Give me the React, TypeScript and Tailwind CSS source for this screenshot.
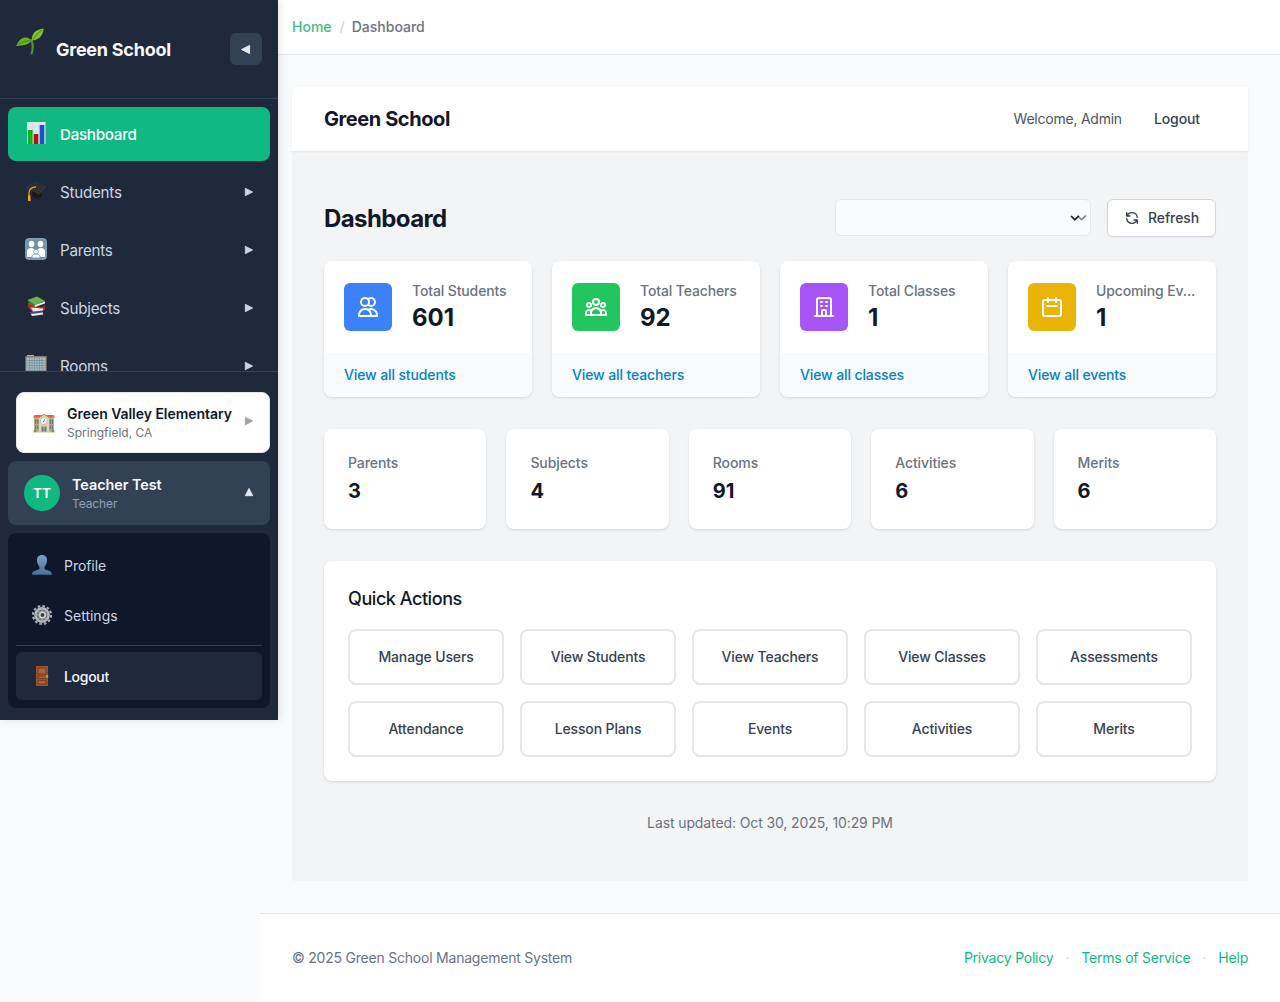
import type { ReactNode } from "react";

function Seedling() {
  return (
    <svg viewBox="0 0 28 28" className="h-7 w-7">
      <path d="M15.6 25.5C17.3 20 17 15.500 15.200 12" fill="none" stroke="#4f9a22" strokeWidth="2.100" strokeLinecap="round" />
      <path d="M15.700 13C11 6.500 3 9.500 0.300 18C7 17.500 12 17 15.700 13Z" fill="#6fae25" />
      <path d="M15.800 12.500C15.500 5 20 1.500 27.700 0.500C27 8 22.500 12 15.800 12.500Z" fill="#7fc22c" />
      <path d="M2 16.500Q8 12 15 12.800M17 11.500Q20 6 26 2" fill="none" stroke="#477f16" strokeWidth="0.900" />
    </svg>
  );
}

function ChartEmoji() {
  return (
    <svg viewBox="0 0 24 24" className="h-6 w-6">
      <rect x="3" y="1" width="18.500" height="22" fill="#dfe7ee" />
      <path d="M3 6h18.500M3 11h18.500M3 16h18.500M8.800 1v22M15 1v22" stroke="#c5d2dd" strokeWidth="0.500" />
      <rect x="4" y="9" width="4.600" height="14" fill="#0cb31b" />
      <rect x="9.700" y="13" width="4.600" height="10" fill="#b90d18" />
      <rect x="15.700" y="4" width="4.600" height="19" fill="#1258c4" />
    </svg>
  );
}

function CapEmoji() {
  return (
    <svg viewBox="0 0 24 24" className="mt-px h-6 w-6">
      <path d="M7 10L17 12L18 16Q15 20 9 17Z" fill="#191919" />
      <path d="M2 7L11.500 1.500L22 6L15 14Z" fill="#303030" />
      <path d="M2 7L15 14L22 6" fill="none" stroke="#494949" strokeWidth="0.700" />
      <path d="M12 7Q5.500 7 5 13V20" fill="none" stroke="#ed9b22" strokeWidth="1.300" />
      <path d="M4 15.500L6.200 15L6.700 21H4Z" fill="#f5a522" />
    </svg>
  );
}

function FamilyEmoji() {
  return (
    <svg viewBox="0 0 24 24" className="h-6 w-6">
      <rect x="1.300" y="1.300" width="21.400" height="21.400" rx="3.200" fill="#7090af" />
      <rect x="1.800" y="1.800" width="20.400" height="20.400" rx="3" fill="none" stroke="#94aec7" />
      <g fill="#fff">
        <ellipse cx="7.500" cy="7" rx="2.800" ry="3.300" />
        <ellipse cx="16.500" cy="7" rx="2.800" ry="3.300" />
        <path d="M3 20V14Q3.500 11 7 11Q9.500 11 11 13L9 20ZM15 20L13 13Q14.500 11 17 11Q20.500 11 21 14V20Z" />
      </g>
      <g fill="#fff" stroke="#7090af" strokeWidth="0.800">
        <path d="M8 21V19Q8.500 16.800 12 16.800T16 19V21Z" />
        <circle cx="12" cy="14.800" r="2.400" />
      </g>
    </svg>
  );
}

function BooksEmoji() {
  return (
    <svg viewBox="0 0 24 24" className="h-6 w-6">
      <path d="M5 17L18 15.500L20 19.500L8 21Z" fill="#364ba0" />
      <path d="M7 19L19 17.500V19.500L8 21Z" fill="#ececf1" />
      <path d="M4 8L17 12.500L21 10.500V15L9 17Q3 14 4 8Z" fill="#c7242d" />
      <path d="M7 12.500L19 13.500V15.500L9 16.500Z" fill="#f3e8e0" />
      <path d="M3.500 5L13 1.500L21 6L10.500 10Z" fill="#6ab34f" />
      <path d="M3.500 5L10.500 10V12L5 9Z" fill="#3f7e31" />
      <path d="M10.500 10L21 6.500V8.500L11 12Z" fill="#e8e8df" />
    </svg>
  );
}

function OfficeEmoji() {
  return (
    <svg viewBox="0 0 24 24" className="mt-px h-6 w-6">
      <path d="M3 1H10V3H3Z" fill="#aeb1b2" />
      <path d="M1.300 2H22.700V23H1.300Z" fill="#877b70" />
      <path d="M2.500 3.500H21.500V22H2.500Z" fill="#a8bdc8" />
      <path d="M3 6.500H21M3 9H21M3 11.500H21M3 14H21M3 16.500H21M3 19H21M5.500 4V22M8 4V22M10.500 4V22M13 4V22M15.500 4V22M18 4V22" stroke="#748995" strokeWidth="0.700" />
    </svg>
  );
}

function SchoolEmoji() {
  return (
    <svg viewBox="0 0 24 24" className="h-6 w-6">
      <path d="M2 6H22V21H2Z" fill="#b9ad88" />
      <path d="M1 6.500L2.500 4H21.500L23 6.500Z" fill="#dd6854" />
      <path d="M7 7L12 3.500L17 7V21H7Z" fill="#e0d6b0" />
      <path d="M6.500 6.800L12 3.200L17.500 6.800" fill="none" stroke="#e57663" strokeWidth="1" />
      <circle cx="12" cy="10" r="3.500" fill="#fff" stroke="#b5a982" strokeWidth="0.700" />
      <path d="M12.500 8.500L12 10.300L10.500 11" fill="none" stroke="#3b3b3b" strokeWidth="0.700" />
      <path d="M3 8.500H4.300V13H3ZM5.200 8.500H6.500V13H5.200ZM17.700 8.500H19V13H17.700ZM19.800 8.500H21V13H19.800ZM3 14.500H4.300V18H3ZM5.200 14.500H6.500V18H5.200ZM17.700 14.500H19V18H17.700ZM19.800 14.500H21V18H19.800ZM9.500 15.500H14.500V21H9.500Z" fill="#67797c" />
      <path d="M12 15V21M8.500 15H15.500M1 21H23" stroke="#c9bf93" strokeWidth="0.900" />
      <circle cx="3" cy="19.800" r="1.400" fill="#7d9145" />
      <circle cx="21" cy="19.800" r="1.400" fill="#7d9145" />
    </svg>
  );
}

function PersonEmoji() {
  return (
    <svg viewBox="0 0 22 22" className="h-[22px] w-[22px]">
      <defs>
        <linearGradient id="bust" x2="0" y2="1">
          <stop stopColor="#7ba3c2" />
          <stop offset="1" stopColor="#4b7194" />
        </linearGradient>
      </defs>
      <path d="M11 1C7.500 1 5.500 3.500 6 7C6.300 10 7.500 11.500 8.500 12.500V15C7 16.500 1 16 1 20.700H21C21 16 15 16.500 13.500 15V12.500C14.500 11.500 15.700 10 16 7C16.500 3.500 14.500 1 11 1Z" fill="url(#bust)" />
    </svg>
  );
}

function GearEmoji() {
  return (
    <svg viewBox="0 0 22 22" className="h-[22px] w-[22px]">
      <circle cx="11" cy="11" r="9" fill="none" stroke="#a8abad" strokeWidth="2.200" strokeDasharray="2.700 2.012" />
      <circle cx="11" cy="11" r="6.700" fill="#777b80" stroke="#b7babd" strokeWidth="2.400" />
      <path d="M11 4V18M4 11H18M6 6L16 16M16 6L6 16" stroke="#a2a6aa" strokeWidth="1" />
      <circle cx="11.500" cy="11" r="2.700" fill="#353d49" stroke="#d5d7d8" strokeWidth="1.500" />
    </svg>
  );
}

function DoorEmoji() {
  return (
    <svg viewBox="0 0 22 22" className="h-[22px] w-[22px]">
      <path d="M5 1H17V21H5Z" fill="#9b522f" />
      <path d="M7 3H15V9H7ZM7 11H15V13.500H7ZM7 15.500H15V19H7Z" fill="#ad623b" stroke="#713718" strokeWidth="0.800" />
      <circle cx="16" cy="11.500" r="1.300" fill="#d1a52b" />
    </svg>
  );
}

function Triangle({ className }: { className: string }) {
  return (
    <svg viewBox="0 0 10 10" className={className} fill="currentColor" stroke="currentColor" strokeLinejoin="round">
      <path d="M1.300 1.300L8.600 5L1.300 8.700Z" strokeWidth="0.900" />
    </svg>
  );
}

function OutlineIcon({ d, className }: { d: string; className: string }) {
  return (
    <svg viewBox="0 0 24 24" fill="none" stroke="currentColor" strokeWidth="2" strokeLinecap="round" strokeLinejoin="round" className={className}>
      <path d={d} />
    </svg>
  );
}

const navItems: { label: string; icon: ReactNode }[] = [
  { label: "Students", icon: <CapEmoji /> },
  { label: "Parents", icon: <FamilyEmoji /> },
  { label: "Subjects", icon: <BooksEmoji /> },
  { label: "Rooms", icon: <OfficeEmoji /> },
];

const stats = [
  {
    label: "Total Students",
    value: "601",
    link: "View all students",
    tile: "bg-[#3b82f6]",
    d: "M12 4.354a4 4 0 110 5.292M15 21H3v-1a6 6 0 0112 0v1zm0 0h6v-1a6 6 0 00-9-5.197M13 7a4 4 0 11-8 0 4 4 0 018 0z",
  },
  {
    label: "Total Teachers",
    value: "92",
    link: "View all teachers",
    tile: "bg-[#22c55e]",
    d: "M17 20h5v-2a3 3 0 00-5.356-1.857M17 20H7m10 0v-2c0-.656-.126-1.283-.356-1.857M7 20H2v-2a3 3 0 015.356-1.857M7 20v-2c0-.656.126-1.283.356-1.857m0 0a5.002 5.002 0 019.288 0M15 7a3 3 0 11-6 0 3 3 0 016 0zm6 3a2 2 0 11-4 0 2 2 0 014 0zM7 10a2 2 0 11-4 0 2 2 0 014 0z",
  },
  {
    label: "Total Classes",
    value: "1",
    link: "View all classes",
    tile: "bg-[#a855f7]",
    d: "M19 21V5a2 2 0 00-2-2H7a2 2 0 00-2 2v16m14 0h2m-2 0h-5m-9 0H3m2 0h5M9 7h1m-1 4h1m4-4h1m-1 4h1m-5 10v-5a1 1 0 011-1h2a1 1 0 011 1v5m-4 0h4",
  },
  {
    label: "Upcoming Ev...",
    value: "1",
    link: "View all events",
    tile: "bg-[#eab308]",
    d: "M8 7V3m8 4V3m-9 8h10M5 21h14a2 2 0 002-2V7a2 2 0 00-2-2H5a2 2 0 00-2 2v12a2 2 0 002 2z",
  },
];

const counts = [
  ["Parents", "3"],
  ["Subjects", "4"],
  ["Rooms", "91"],
  ["Activities", "6"],
  ["Merits", "6"],
];

const actions = [
  "Manage Users",
  "View Students",
  "View Teachers",
  "View Classes",
  "Assessments",
  "Attendance",
  "Lesson Plans",
  "Events",
  "Activities",
  "Merits",
];

function Sidebar() {
  return (
    <aside className="flex h-[720px] w-[278px] flex-col bg-[#1e293b] shadow-[2px_0_8px_rgba(0,0,0,0.1)]">
      <div className="flex h-[99px] shrink-0 items-center justify-between border-b border-[#334155] px-4">
        <div className="flex items-center gap-3 pt-0.5">
          <div className="-mt-4">
            <Seedling />
          </div>
          <span className="text-lg font-bold tracking-[-0.25px] text-[#f8fafc]">Green School</span>
        </div>
        <button className="flex h-8 w-8 items-center justify-center rounded-md bg-[#334155] pr-px text-slate-200">
          <Triangle className="mt-px h-[11px] w-[11px] rotate-180" />
        </button>
      </div>

      <nav className="flex min-h-0 flex-1 flex-col gap-1 overflow-hidden p-2">
        <a className="flex h-[54px] shrink-0 items-center gap-3 rounded-lg bg-[#10b981] px-4 pt-0.5 text-[15.2px] font-medium tracking-[-0.3px] text-white">
          <span className="-mt-1">
            <ChartEmoji />
          </span>
          Dashboard
        </a>
        {navItems.map((item) => (
          <a key={item.label} className="flex h-[54px] shrink-0 items-center gap-3 px-4 pt-0.5 text-[15.2px] tracking-[-0.25px] text-slate-300">
            <span className="-mt-1">{item.icon}</span>
            <span className="flex-1">{item.label}</span>
            <Triangle className="-mt-[3px] h-2.5 w-2.5" />
          </a>
        ))}
      </nav>

      <div className="flex h-[349px] shrink-0 flex-col gap-2 border-t border-[#334155] px-2 pt-5">
        <div className="ml-2 flex h-[61px] items-center rounded-lg border border-[#e5e7eb] bg-white px-[15px]">
          <SchoolEmoji />
          <div className="ml-[11px] flex-1 pt-px">
            <div className="text-[14px] leading-[19px] font-semibold tracking-[-0.04px] whitespace-nowrap text-[#111827]">Green Valley Elementary</div>
            <div className="text-xs leading-[19px] text-[#6b7280]">Springfield, CA</div>
          </div>
          <Triangle className="-mt-[3px] h-2.5 w-2.5 text-[#9ca3af]" />
        </div>

        <div className="flex h-16 items-center gap-3 rounded-lg bg-[#334155] px-4">
          <div className="flex h-9 w-9 items-center justify-center rounded-full bg-[#10b981] text-[13.6px] font-semibold text-white">TT</div>
          <div className="flex-1 pt-0.5">
            <div className="text-[14.4px] leading-5 font-semibold tracking-[-0.05px] text-[#f8fafc]">Teacher Test</div>
            <div className="text-xs leading-[18px] tracking-[-0.1px] text-slate-400">Teacher</div>
          </div>
          <Triangle className="-mt-0.5 h-2.5 w-2.5 -rotate-90 text-slate-200" />
        </div>

        <div className="flex h-[175px] flex-col rounded-lg bg-[#0f172a] p-2 text-sm text-slate-300">
          <a className="flex h-12 items-center gap-[11px] px-[15px]">
            <PersonEmoji />
            <span className="pt-0.5 tracking-[-0.05px]">Profile</span>
          </a>
          <a className="mt-0.5 flex h-12 items-center gap-[11px] px-[15px]">
            <GearEmoji />
            <span className="pt-0.5">Settings</span>
          </a>
          <div className="mt-1.5 border-t border-[#334155]" />
          <a className="mt-1.5 flex h-12 items-center gap-[11px] rounded-md bg-[#1e293b] px-[15px] font-medium tracking-[-0.3px] text-[#f8fafc]">
            <DoorEmoji />
            <span className="pt-0.5">Logout</span>
          </a>
        </div>
      </div>
    </aside>
  );
}

function Toolbar() {
  return (
    <div className="flex h-[38px] items-center justify-between">
      <h1 className="pt-0.5 text-2xl font-bold tracking-[-0.6px] text-[#111827]">Dashboard</h1>
      <div className="flex items-start gap-4">
        <div className="flex h-[37px] w-64 items-center justify-end rounded-md border border-[#e5e7eb] bg-[#f9fafb] pr-[3px]">
          <svg viewBox="0 0 18 8" className="h-2 w-[18px]" fill="none" strokeWidth="1.700">
            <path d="M8.700 2L12.700 5.700L17 1.700" stroke="#838790" />
            <path d="M2 2L5.800 5.700L9.800 1.900" stroke="#1f2937" />
          </svg>
        </div>
        <button className="flex h-[38px] w-[109px] items-center gap-2 rounded-md border border-[#d1d5db] bg-white pl-4 text-sm font-medium tracking-[-0.1px] text-[#374151] shadow-xs">
          <OutlineIcon
            className="h-4 w-4"
            d="M4 4v5h.582m15.356 2A8.001 8.001 0 004.582 9m0 0H9m11 11v-5h-.581m0 0a8.003 8.003 0 01-15.357-2m15.357 2H15"
          />
          Refresh
        </button>
      </div>
    </div>
  );
}

export default function App() {
  return (
    <div className="flex min-h-[1002px] bg-[#f8fafc] font-['Inter',sans-serif] text-[#111827]">
      <div className="relative z-10 w-[260px] shrink-0">
        <Sidebar />
      </div>

      <div className="flex min-w-0 flex-1 flex-col">
        <header className="flex h-[55px] items-center gap-2 border-b border-[#e5e7eb] bg-white px-8 text-sm font-medium">
          <a className="text-[#42b983]">Home</a>
          <span className="text-[#d1d5db]">/</span>
          <span className="-ml-px text-[#6b7280]">Dashboard</span>
        </header>

        <main className="p-8">
          <div className="h-[794px] bg-[#f3f4f6]">
            <div className="flex h-16 items-center justify-between bg-white pr-12 pl-8 shadow-[0_1px_2px_rgba(0,0,0,0.08)]">
              <span className="text-xl font-bold tracking-[-0.42px]">Green School</span>
              <div className="flex gap-8 text-sm text-[#374151]">
                <span className="tracking-[-0.23px] text-[#4b5563]">Welcome, Admin</span>
                <span className="font-medium tracking-[-0.1px]">Logout</span>
              </div>
            </div>

            <div className="px-8 pt-12">
              <Toolbar />

              <div className="mt-6 grid grid-cols-4 gap-5">
                {stats.map((s) => (
                  <div key={s.label} className="overflow-hidden rounded-lg bg-white shadow-sm">
                    <div className="flex h-[92px] items-center p-5">
                      <div className={`flex h-12 w-12 shrink-0 items-center justify-center rounded-md text-white ${s.tile}`}>
                        <OutlineIcon className="h-6 w-6" d={s.d} />
                      </div>
                      <div className="ml-5 min-w-0 flex-1">
                        <div className="text-sm font-medium tracking-[-0.13px] whitespace-nowrap text-[#6b7280]">{s.label}</div>
                        <div className="-mb-px pt-px text-2xl font-bold">{s.value}</div>
                      </div>
                    </div>
                    <div className="bg-[#f9fafb] px-5 py-3 text-sm font-medium tracking-[-0.12px] text-[#0284c7]">{s.link}</div>
                  </div>
                ))}
              </div>

              <div className="mt-8 grid grid-cols-5 gap-5">
                {counts.map(([label, value]) => (
                  <div key={label} className="h-[100px] rounded-lg bg-white p-6 shadow-sm">
                    <div className="text-sm font-medium tracking-[-0.08px] text-[#6b7280]">{label}</div>
                    <div className="mt-1 text-xl font-bold">{value}</div>
                  </div>
                ))}
              </div>

              <section className="mt-8 h-[220px] rounded-lg bg-white p-6 shadow-sm">
                <h2 className="text-lg font-medium tracking-[-0.44px]">Quick Actions</h2>
                <div className="mt-4 grid grid-cols-5 gap-4">
                  {actions.map((label) => (
                    <button key={label} className="h-14 rounded-lg border-2 border-[#e5e7eb] bg-white text-sm font-medium tracking-[-0.14px] text-[#374151]">
                      {label}
                    </button>
                  ))}
                </div>
              </section>

              <p className="mt-8 text-center text-sm tracking-[-0.11px] text-[#6b7280]">Last updated: Oct 30, 2025, 10:29 PM</p>
            </div>
          </div>
        </main>

        <footer className="flex flex-1 items-center justify-between border-t border-[#e5e7eb] bg-white px-8 text-sm text-[#6b7280]">
          <span className="tracking-[-0.22px]">© 2025 Green School Management System</span>
          <div className="flex gap-3 tracking-[-0.22px] text-[#10b981]">
            <a>Privacy Policy</a>
            <span className="text-[#d1d5db]">·</span>
            <a>Terms of Service</a>
            <span className="text-[#d1d5db]">·</span>
            <a>Help</a>
          </div>
        </footer>
      </div>
    </div>
  );
}
